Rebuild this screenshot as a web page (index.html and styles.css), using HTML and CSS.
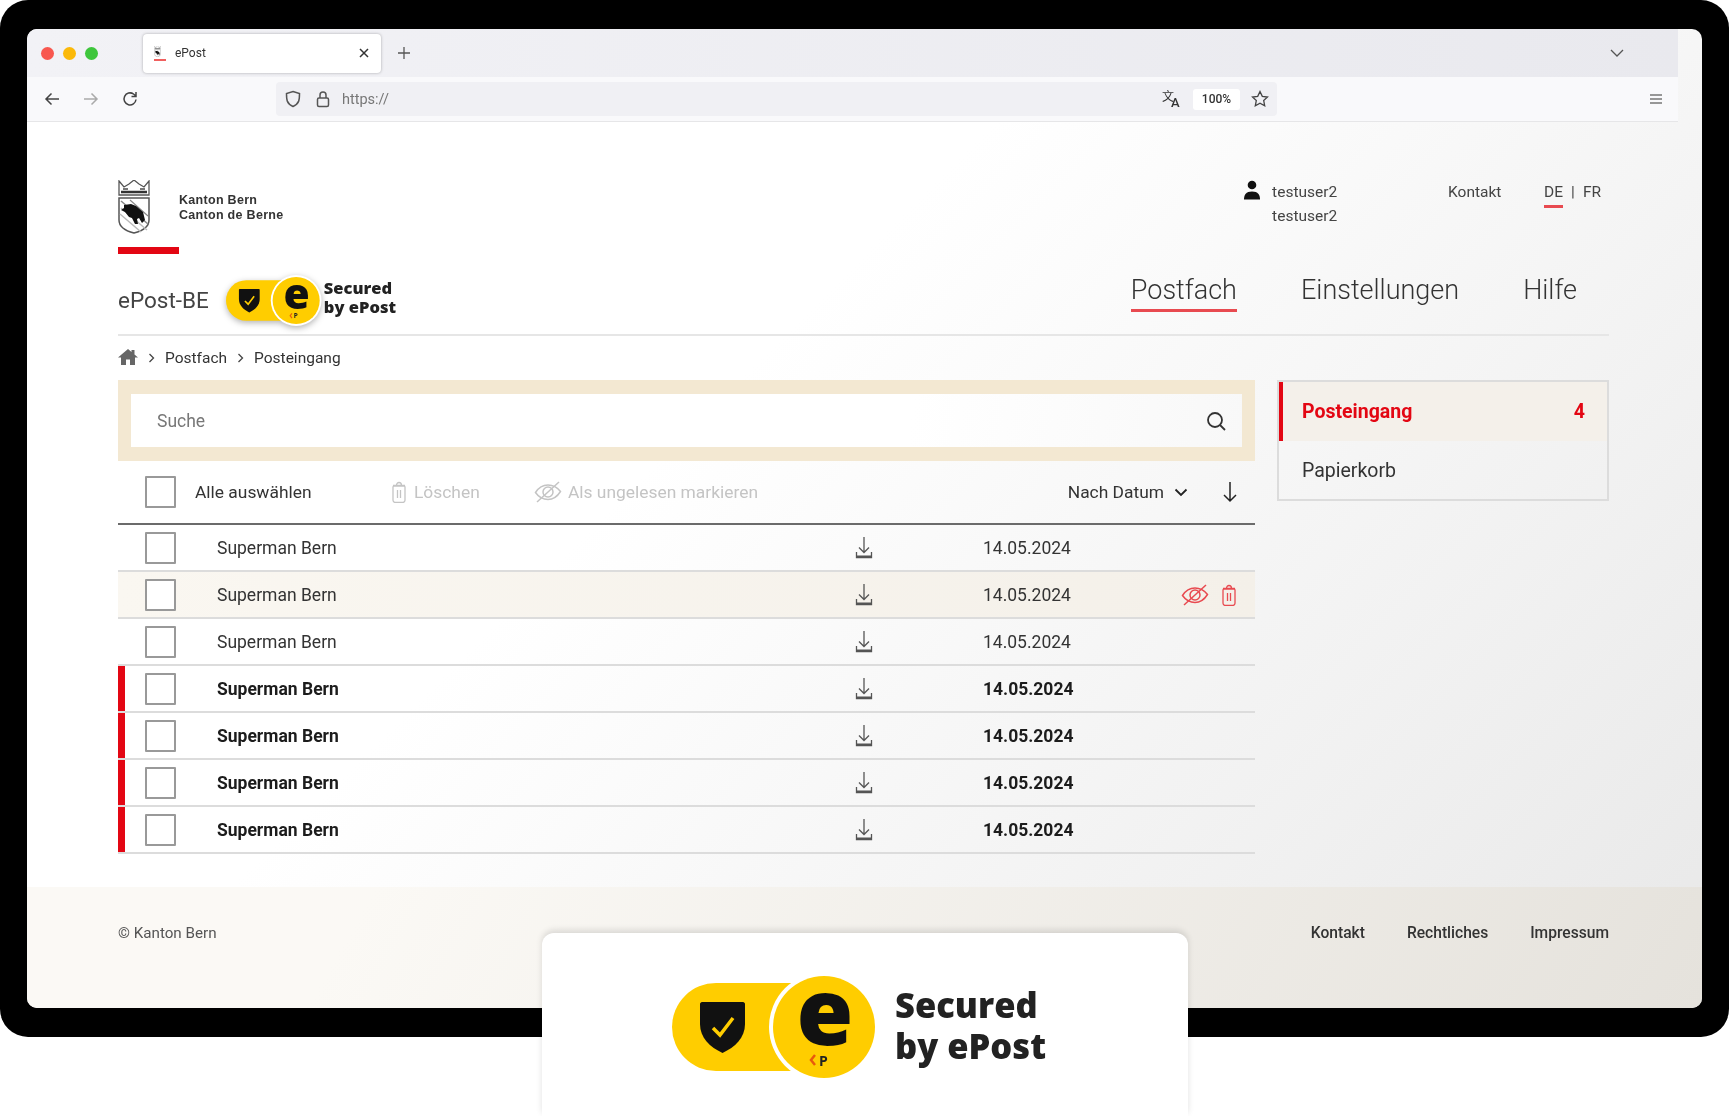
FILE: index.html
```html
<!DOCTYPE html>
<html lang="de">
<head>
<meta charset="UTF-8">
<title>ePost</title>
<link rel="stylesheet" href="styles.css">
</head>
<body>
<svg class="defs" aria-hidden="true">
    <symbol id="i-download" viewBox="0 0 18 24">
        <path d="M9 1v15M4 11.5 9 16.5 14 11.5" fill="none" stroke="currentColor" stroke-width="1.3"/>
        <path d="M1.5 16v5.5h15V16" fill="none" stroke="currentColor" stroke-width="1.3"/>
        <path d="M1.5 20.5h15" stroke="currentColor" stroke-width="2"/>
    </symbol>
    <symbol id="i-trash" viewBox="0 0 14 22">
        <path d="M2 5h10a1 1 0 0 1 1 1v13a2.5 2.5 0 0 1-2.5 2.5h-7A2.5 2.5 0 0 1 1 19V6a1 1 0 0 1 1-1zM1 4.5h12M4.5 4.5c0-4 5-4 5 0M5.5 9v8M8.5 9v8" fill="none" stroke="currentColor" stroke-width="1.3"/>
    </symbol>
    <symbol id="i-eye" viewBox="0 0 28 22">
        <path d="M1.5 11.5C5 6 9.5 4 14 4s9 2 12.5 6.5C23 16 18.5 18.5 14 18.5S5 16.5 1.5 11.500z" fill="none" stroke="currentColor" stroke-width="1.5"/>
        <circle cx="14" cy="11" r="5" fill="none" stroke="currentColor" stroke-width="1.5"/>
        <path d="M3 21 25 1" stroke="currentColor" stroke-width="1.5"/>
    </symbol>
    <symbol id="i-badge" viewBox="0 0 208 110">
        <path d="M44 11h90v88H44a44 44 0 0 1 0-88z" fill="#ffcd00"/>
        <circle cx="152" cy="55" r="55" fill="#fff"/>
        <circle cx="152" cy="55" r="51" fill="#ffcd00"/>
        <path d="M30 30h41c1 0 2 1 2 2v20c0 14-10 23-22.5 29C38 75 28 66 28 52V32c0-1 1-2 2-2z" fill="#111"/>
        <path d="M41 56l7 7 13-17" fill="none" stroke="#ffcd00" stroke-width="3.5"/>
        <path d="M143 83l-4 5 4 5" fill="none" stroke="#e8590c" stroke-width="2.5"/>
    </symbol>
    <symbol id="i-crest" viewBox="0 0 32 54">
        <path d="M1 1l5 6 5-3 5-4 5 4 5 3 5-6v14H1z" fill="none" stroke="#555" stroke-width="1.3"/>
        <path d="M3 12h26" stroke="#333" stroke-width="2.5"/>
        <path d="M5 9h5M22 9h5" stroke="#777" stroke-width="2"/>
        <path d="M1 18h30v22c0 7-7 11-15 13C8 51 1 47 1 40z" fill="#fff" stroke="#555" stroke-width="1.5"/>
        <path d="M3 21 30 44" stroke="#888" stroke-width="1.5"/>
        <path d="M12 20 30 36" stroke="#888" stroke-width="1.2"/>
        <path d="M3 28 29 50M2 34 23 52" stroke="#bbb" stroke-width="1.5"/>
        <path d="M6 25l7-1 5 2 7 6 2 8-3 3-3-5-2 1 1 5h-3l-3-6-3-1-4-5-4-2 3-2z" fill="#111"/>
    </symbol>
</svg>

<div class="frame">
    <div class="screen">
        <div class="tabbar">
            <div class="dots"><span class="dot red"></span><span class="dot yellow"></span><span class="dot green"></span></div>
            <div class="tab">
                <div class="favicon">
                    <svg class="favicon-crest" viewBox="0 0 32 54"><use href="#i-crest"/></svg>
                </div>
                <span class="tab-title">ePost</span>
                <svg class="tab-close" viewBox="0 0 12 12"><path d="M2 2l8 8M10 2l-8 8" stroke="#333" stroke-width="1.5"/></svg>
            </div>
            <svg class="tab-new" viewBox="0 0 14 14"><path d="M7 1v12M1 7h12" stroke="#555" stroke-width="1.3"/></svg>
            <svg class="tab-list" viewBox="0 0 14 8"><path d="M1 1l6 6 6-6" fill="none" stroke="#555" stroke-width="1.3"/></svg>
        </div>
        <div class="toolbar">
            <svg class="nav-btn" viewBox="0 0 16 16"><path d="M15 8H2M7.5 2.5 2 8l5.5 5.5" fill="none" stroke="#444" stroke-width="1.5"/></svg>
            <svg class="nav-btn" viewBox="0 0 16 16"><path d="M1 8h13M8.5 2.5 14 8l-5.5 5.5" fill="none" stroke="#aaa" stroke-width="1.5"/></svg>
            <svg class="nav-btn" viewBox="0 0 16 16"><path d="M14 8.5A6 6 0 1 1 11.5 3L14 5M14 1v4.5H9.5" fill="none" stroke="#444" stroke-width="1.5"/></svg>
            <div class="urlbar">
                <svg class="url-icon" viewBox="0 0 16 18"><path d="M8 1.5 14.5 3.5c0 6 0 10-6.5 13C1.5 13.5 1.5 9.5 1.5 3.5z" fill="none" stroke="#555" stroke-width="1.5"/></svg>
                <svg class="url-icon" viewBox="0 0 16 18"><path d="M5 8V5a3 3 0 0 1 6 0v3" fill="none" stroke="#555" stroke-width="1.5"/><rect x="2.5" y="8" width="11" height="8.5" rx="1.5" fill="none" stroke="#555" stroke-width="1.5"/></svg>
                <span class="url-text">https://</span>
                <svg class="url-translate" viewBox="0 0 20 20"><text class="tr-a" x="0" y="12">文</text><text class="tr-b" x="9" y="18">A</text></svg>
                <span class="url-zoom">100%</span>
                <svg class="url-star" viewBox="0 0 18 18"><path d="M9 1.5l2.3 4.8 5.2.7-3.8 3.6 1 5.2L9 13.3l-4.7 2.5 1-5.2L1.5 7l5.2-.7z" fill="none" stroke="#444" stroke-width="1.3"/></svg>
            </div>
            <svg class="hamburger" viewBox="0 0 14 12"><path d="M1 2h12M1 6h12M1 10h12" stroke="#777" stroke-width="1.5"/></svg>
        </div>

        <div class="page">
            <div class="page-top">
                <div class="brand">
                    <div class="brand-row">
                        <svg class="crest" viewBox="0 0 32 54"><use href="#i-crest"/></svg>
                        <div class="brand-name">Kanton Bern<br>Canton de Berne</div>
                    </div>
                    <div class="brand-bar"></div>
                </div>
                <div class="meta">
                    <svg class="user-icon" viewBox="0 0 18 20"><circle cx="9" cy="5" r="4.3" fill="#111"/><path d="M1 19.5c0-5 2-8 8-8s8 3 8 8z" fill="#111"/></svg>
                    <div class="user-name">testuser2<br>testuser2</div>
                    <a class="meta-link">Kontakt</a>
                    <div class="lang"><a class="lang-on">DE</a><span class="lang-sep">|</span><a>FR</a></div>
                </div>
            </div>

            <div class="mainnav">
                <div class="app-title">
                    <span>ePost-BE</span>
                    <svg class="badge-small" viewBox="0 0 208 110">
                        <use href="#i-badge"/>
                        <text class="badge-e" x="153" y="73" text-anchor="middle">e</text>
                        <text class="badge-p" x="147" y="94">P</text>
                    </svg>
                    <div class="badge-text small">Secured<br>by ePost</div>
                </div>
                <nav class="nav-links">
                    <a class="active">Postfach</a>
                    <a>Einstellungen</a>
                    <a>Hilfe</a>
                </nav>
            </div>

            <div class="breadcrumb">
                <svg class="home" viewBox="0 0 20 18"><path d="M10 1 0 9.5h3V17h5v-5.5h4V17h5V9.5h3l-3.5-3V2h-3v2z" fill="#666"/></svg>
                <svg class="crumb-sep" viewBox="0 0 7 10"><path d="M1.5 1 5.5 5l-4 4" fill="none" stroke="#444" stroke-width="1.3"/></svg>
                <a>Postfach</a>
                <svg class="crumb-sep" viewBox="0 0 7 10"><path d="M1.5 1 5.5 5l-4 4" fill="none" stroke="#444" stroke-width="1.3"/></svg>
                <a>Posteingang</a>
            </div>

            <div class="content">
                <div class="inbox">
                    <div class="search">
                        <div class="search-box">
                            <span>Suche</span>
                            <svg class="search-icon" viewBox="0 0 20 20"><circle cx="9" cy="9" r="7" fill="none" stroke="#333" stroke-width="1.8"/><path d="M14 14l5 5" stroke="#333" stroke-width="1.8"/></svg>
                        </div>
                    </div>
                    <div class="list-tools">
                        <span class="checkbox"></span>
                        <span class="select-all">Alle auswählen</span>
                        <span class="tool tool-delete"><svg class="ico-trash" viewBox="0 0 14 22"><use href="#i-trash"/></svg>Löschen</span>
                        <span class="tool tool-unread"><svg class="ico-eye" viewBox="0 0 28 22"><use href="#i-eye"/></svg>Als ungelesen markieren</span>
                        <span class="sort">Nach Datum
                            <svg class="sort-chevron" viewBox="0 0 14 9"><path d="M1.5 1.5 7 7l5.5-5.500" fill="none" stroke="#222" stroke-width="1.8"/></svg>
                        </span>
                        <svg class="sort-dir" viewBox="0 0 16 22"><path d="M8 1v19M2 14l6 6 6-6" fill="none" stroke="#222" stroke-width="1.5"/></svg>
                    </div>
                    <div class="row">
                        <span class="checkbox"></span><span>Superman Bern</span>
                        <svg class="ico-download" viewBox="0 0 18 24"><use href="#i-download"/></svg><span>14.05.2024</span>
                    </div>
                    <div class="row hover">
                        <span class="checkbox"></span><span>Superman Bern</span>
                        <svg class="ico-download" viewBox="0 0 18 24"><use href="#i-download"/></svg><span>14.05.2024</span>
                        <div class="row-actions">
                            <svg class="ico-eye" viewBox="0 0 28 22"><use href="#i-eye"/></svg>
                            <svg class="ico-trash" viewBox="0 0 14 22"><use href="#i-trash"/></svg>
                        </div>
                    </div>
                    <div class="row">
                        <span class="checkbox"></span><span>Superman Bern</span>
                        <svg class="ico-download" viewBox="0 0 18 24"><use href="#i-download"/></svg><span>14.05.2024</span>
                    </div>
                    <div class="row unread">
                        <span class="checkbox"></span><span>Superman Bern</span>
                        <svg class="ico-download" viewBox="0 0 18 24"><use href="#i-download"/></svg><span>14.05.2024</span>
                    </div>
                    <div class="row unread">
                        <span class="checkbox"></span><span>Superman Bern</span>
                        <svg class="ico-download" viewBox="0 0 18 24"><use href="#i-download"/></svg><span>14.05.2024</span>
                    </div>
                    <div class="row unread">
                        <span class="checkbox"></span><span>Superman Bern</span>
                        <svg class="ico-download" viewBox="0 0 18 24"><use href="#i-download"/></svg><span>14.05.2024</span>
                    </div>
                    <div class="row unread">
                        <span class="checkbox"></span><span>Superman Bern</span>
                        <svg class="ico-download" viewBox="0 0 18 24"><use href="#i-download"/></svg><span>14.05.2024</span>
                    </div>
                </div>
                <aside class="folders">
                    <a class="folder active"><span>Posteingang</span><span class="count">4</span></a>
                    <a class="folder">Papierkorb</a>
                </aside>
            </div>
        </div>

        <footer class="footer">
            <span class="copyright">© Kanton Bern</span>
            <div class="footer-links"><a>Kontakt</a><a>Rechtliches</a><a>Impressum</a></div>
        </footer>
    </div>
</div>

<!-- the enlarged seal lying over the screenshot frame -->
<div class="seal-card">
    <svg class="badge-big" viewBox="0 0 208 110">
        <use href="#i-badge"/>
        <text class="badge-e" x="153" y="73" text-anchor="middle">e</text>
        <text class="badge-p" x="147" y="94">P</text>
    </svg>
    <div class="badge-text big">Secured<br>by ePost</div>
</div>
</body>
</html>
```

FILE: styles.css
```css
body {
    margin: 0;
    background-color: #fff;
    font-family: Roboto, "Liberation Sans", sans-serif;
    color: #333;
    height: 1116px;
    overflow: hidden;
    position: relative;
}
a {
    color: inherit;
    text-decoration: none;
}
.defs {
    position: absolute;
    width: 0;
    height: 0;
}

/* black device frame, the whole shot is a little soft */
.frame {
    height: 1037px;
    box-sizing: border-box;
    padding: 29px 27px 0;
    background-color: #000;
    border-radius: 28px;
    filter: blur(0.4px);
}
.screen {
    height: 979px;
    display: flex;
    flex-direction: column;
    border-radius: 10px;
    overflow: hidden;
    background: linear-gradient(135deg, #fff 40%, #e8e8e8 100%);
}

/* browser chrome */
.tabbar {
    height: 48px;
    flex: none;
    display: flex;
    align-items: center;
    margin-right: 24px;
    background: linear-gradient(90deg, #f2f2f6, #e9e9ee);
}
.dots {
    display: flex;
    gap: 9px;
    margin-left: 14px;
    width: 102px;
}
.dot {
    width: 13px;
    height: 13px;
    border-radius: 50%;
}
.dot.red { background-color: #f8574f; }
.dot.yellow { background-color: #fbb909; }
.dot.green { background-color: #3ec63c; }
.tab {
    width: 238px;
    height: 39px;
    box-sizing: border-box;
    padding: 0 11px;
    display: flex;
    align-items: center;
    background-color: #fff;
    border-radius: 4px;
    box-shadow: 0 0 3px rgba(0, 0, 0, 0.3);
}
.favicon {
    width: 12px;
    height: 15px;
    box-sizing: border-box;
    border-bottom: 2px solid #f0605e;
}
.favicon-crest {
    display: block;
    width: 7px;
    height: 11px;
}
.tab-title {
    font-size: 12px;
    margin-left: 9px;
    flex: 1;
}
.tab-close {
    width: 12px;
    height: 12px;
}
.tab-new {
    width: 14px;
    height: 14px;
    margin-left: 16px;
}
.tab-list {
    width: 14px;
    height: 8px;
    margin-left: auto;
    margin-right: 54px;
}
.toolbar {
    height: 45px;
    flex: none;
    box-sizing: border-box;
    display: flex;
    align-items: center;
    padding-left: 17px;
    margin-right: 24px;
    background-color: #f9f9fb;
    border-bottom: 1px solid #e6e6e8;
}
.nav-btn {
    width: 16px;
    height: 16px;
    margin-right: 23px;
}
.urlbar {
    width: 1001px;
    height: 34px;
    margin-left: 115px;
    box-sizing: border-box;
    padding: 0 8px 0 9px;
    display: flex;
    align-items: center;
    background-color: #f0f0f4;
    border-radius: 4px;
}
.url-icon {
    width: 16px;
    height: 18px;
    margin-right: 14px;
}
.url-text {
    font-size: 14.5px;
    color: #777;
    margin-left: -3px;
    flex: 1;
}
.url-translate {
    width: 20px;
    height: 20px;
}
.tr-a {
    font-family: "Noto Sans CJK SC", sans-serif;
    font-size: 12px;
    fill: #333;
}
.tr-b {
    font-family: Roboto, sans-serif;
    font-size: 13px;
    font-weight: 500;
    fill: #333;
}
.url-zoom {
    width: 47px;
    height: 21px;
    margin: 0 11px 0 11px;
    font-size: 12px;
    font-weight: 500;
    line-height: 21px;
    text-align: center;
    background-color: #fff;
    border-radius: 3px;
}
.url-star {
    width: 18px;
    height: 18px;
}
.hamburger {
    width: 14px;
    height: 12px;
    margin-left: auto;
    margin-right: 15px;
}

/* page */
.page {
    flex: 1;
    padding: 58px 93px 0 91px;
}
.page-top {
    height: 74px;
    display: flex;
    justify-content: space-between;
}
.brand-row {
    display: flex;
    align-items: center;
    gap: 29px;
}
.crest {
    width: 32px;
    height: 54px;
}
.brand-name {
    font-family: "Liberation Sans", Arial, sans-serif;
    font-size: 12.5px;
    font-weight: 700;
    line-height: 15.5px;
    letter-spacing: 0.3px;
    margin-top: 2px;
}
.brand-bar {
    width: 61px;
    height: 7px;
    margin-top: 13px;
    background-color: #e30613;
}
.meta {
    display: flex;
    align-items: flex-start;
    font-size: 15.5px;
    color: #444;
    padding-right: 8px;
}
.user-icon {
    width: 18px;
    height: 20px;
    margin-right: 11px;
}
.user-name {
    width: 176px;
    line-height: 23.5px;
    margin-top: 1px;
}
.meta-link {
    line-height: 23.5px;
    width: 96px;
    margin-top: 1px;
}
.lang {
    display: flex;
    line-height: 23.5px;
    margin-top: 1px;
}
.lang-on {
    height: 24px;
    border-bottom: 3px solid #e84a50;
}
.lang-sep {
    margin: 0 8px;
}

.mainnav {
    height: 82px;
    box-sizing: border-box;
    padding-top: 19px;
    display: flex;
    justify-content: space-between;
    align-items: flex-start;
    border-bottom: 2px solid #e6e6e6;
}
.app-title {
    height: 50px;
    margin-top: 2px;
    display: flex;
    align-items: center;
    font-size: 22.5px;
    color: #444;
}
.badge-small {
    width: 96px;
    height: 51px;
    margin-left: 17px;
    filter: drop-shadow(0 2px 3px rgba(0, 0, 0, 0.3));
}
.badge-text {
    font-family: "Open Sans", sans-serif;
    font-weight: 800;
    color: #222;
}
.badge-text.small {
    font-size: 16.5px;
    line-height: 19px;
    margin: -7px 0 0 2px;
}
.badge-text.big {
    font-size: 34.5px;
    line-height: 41px;
    margin: 12px 0 0 15px;
}
.badge-e {
    font-family: "Open Sans", sans-serif;
    font-size: 92px;
    font-weight: 800;
    fill: #111;
}
.badge-p {
    font-family: "Open Sans", sans-serif;
    font-size: 14px;
    font-weight: 700;
    fill: #222;
}
.nav-links {
    display: flex;
    gap: 64px;
    padding-right: 32px;
    font-size: 27px;
    font-weight: 300;
    color: #333;
}
.nav-links a {
    line-height: 34px;
    height: 36px;
}
.nav-links a.active {
    border-bottom: 3px solid #e84a50;
}

.breadcrumb {
    height: 44px;
    display: flex;
    align-items: center;
    font-size: 15.5px;
}
.home {
    width: 20px;
    height: 18px;
    margin-top: -3px;
}
.crumb-sep {
    width: 7px;
    height: 10px;
    margin: 0 10px;
}

.content {
    display: grid;
    grid-template-columns: 1137px 332px;
    gap: 22px;
    align-items: start;
}
.search {
    height: 81px;
    box-sizing: border-box;
    padding: 14px 13px;
    background-color: #f3e8d2;
}
.search-box {
    height: 53px;
    box-sizing: border-box;
    padding: 0 16px 0 26px;
    display: flex;
    align-items: center;
    justify-content: space-between;
    background: linear-gradient(100deg, #fff 70%, #f8f8f8);
    font-size: 17.5px;
    color: #777;
}
.search-icon {
    width: 20px;
    height: 20px;
}
.checkbox {
    width: 31px;
    height: 32px;
    box-sizing: border-box;
    border: 2px solid #999;
    border-radius: 1px;
    background-color: #fff;
}
.list-tools {
    height: 64px;
    box-sizing: border-box;
    padding-left: 27px;
    display: flex;
    align-items: center;
    border-bottom: 2px solid #6b6b6b;
    font-size: 17.4px;
}
.select-all {
    margin-left: 19px;
    width: 194px;
}
.tool {
    display: flex;
    align-items: center;
    color: #c4c4c4;
}
.tool-delete {
    width: 145px;
    gap: 8px;
    margin-left: 3px;
}
.tool-unread {
    gap: 6px;
    margin-left: -3px;
}
.ico-trash {
    width: 14px;
    height: 22px;
}
.ico-eye {
    width: 28px;
    height: 22px;
}
.sort {
    margin-left: auto;
    display: flex;
    align-items: center;
    gap: 10px;
}
.sort-chevron {
    width: 14px;
    height: 9px;
}
.sort-dir {
    width: 16px;
    height: 22px;
    margin: 0 17px 0 34px;
}

.row {
    height: 47px;
    box-sizing: border-box;
    padding-left: 27px;
    display: grid;
    grid-template-columns: 72px 634px 132px 1fr auto;
    align-items: center;
    border-bottom: 2px solid #dcdcdc;
    font-size: 17.5px;
}
.row.hover {
    background: linear-gradient(90deg, #faf7f1, #f4f0e9);
}
.row.unread {
    font-weight: 700;
    color: #1c1c1c;
    box-shadow: inset 7px 0 0 #e30613;
}
.ico-download {
    width: 18px;
    height: 24px;
    color: #555;
    margin-left: 4px;
}
.row-actions {
    grid-column: 5;
    display: flex;
    align-items: center;
    gap: 13px;
    padding-right: 19px;
    color: #e84a50;
}
.folders {
    height: 121px;
    box-sizing: border-box;
    border: 2px solid #dcdcdc;
}
.folder {
    height: 59px;
    box-sizing: border-box;
    padding: 0 22px 0 23px;
    display: flex;
    align-items: center;
    justify-content: space-between;
    font-size: 19.5px;
}
.folder.active {
    background-color: #f4f0ea;
    border-left: 4px solid #e30613;
    padding-left: 19px;
    color: #e30613;
    font-weight: 700;
}

.footer {
    height: 121px;
    flex: none;
    box-sizing: border-box;
    padding: 0 93px 30px 91px;
    display: flex;
    align-items: center;
    justify-content: space-between;
    background: linear-gradient(120deg, #fbf9f5 20%, #e5e2dc 100%);
    font-size: 15.6px;
}
.copyright {
    font-size: 15.2px;
    color: #555;
}
.footer-links {
    display: flex;
    gap: 42px;
    font-weight: 500;
}

/* lies over the frame */
.seal-card {
    position: absolute;
    left: 542px;
    top: 933px;
    width: 646px;
    height: 183px;
    box-sizing: border-box;
    padding: 39px 0 0 130px;
    display: flex;
    align-items: flex-start;
    background-color: #fff;
    border-radius: 12px 12px 0 0;
    box-shadow: 0 -3px 6px rgba(0, 0, 0, 0.12);
    filter: blur(0.4px);
}
.badge-big {
    width: 208px;
    height: 110px;
}
```
